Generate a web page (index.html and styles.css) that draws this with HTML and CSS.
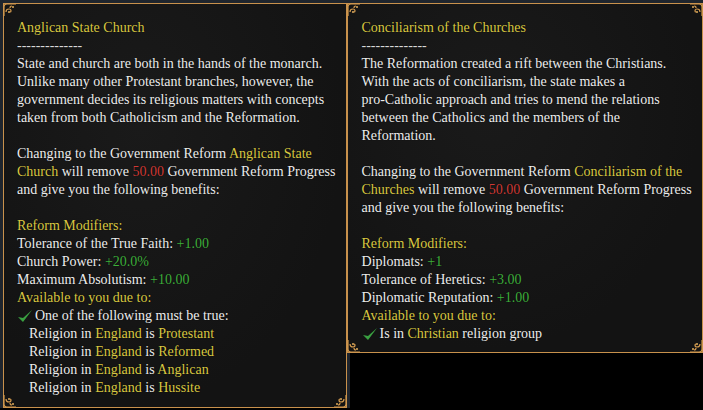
FILE: index.html
```html
<!DOCTYPE html>
<html lang="en">
<head>
  <meta charset="UTF-8" />
  <title>Government Reforms</title>
  <link rel="stylesheet" href="styles.css">
</head>
<body>

  <div class="tooltips">

    <!-- Anglican State Church -->
    <section class="tip tip-left">
      <svg class="corner tl" viewBox="0 0 14 14"><path d="M1 13 V4 Q1 1 4 1 H13 M3 9 q0 -3 3 -3 q2 0 2 2 q0 1 -1 1 M9 3 q-2 0 -2 2" /><circle cx="6" cy="9" r="1" /><circle cx="10" cy="4" r="1" /></svg>
      <svg class="corner bl" viewBox="0 0 14 14"><path d="M1 13 V4 Q1 1 4 1 H13 M3 9 q0 -3 3 -3 q2 0 2 2 q0 1 -1 1 M9 3 q-2 0 -2 2" /><circle cx="6" cy="9" r="1" /><circle cx="10" cy="4" r="1" /></svg>
      <svg class="corner br" viewBox="0 0 14 14"><path d="M1 13 V4 Q1 1 4 1 H13 M3 9 q0 -3 3 -3 q2 0 2 2 q0 1 -1 1 M9 3 q-2 0 -2 2" /><circle cx="6" cy="9" r="1" /><circle cx="10" cy="4" r="1" /></svg>

      <h2 class="tip-title">Anglican State Church</h2>
      <div class="rule">--------------</div>
      <p>State and church are both in the hands of the monarch.<br>
      Unlike many other Protestant branches, however, the<br>
      government decides its religious matters with concepts<br>
      taken from both Catholicism and the Reformation.</p>

      <p>Changing to the Government Reform <span class="hl">Anglican State<br>
      Church</span> will remove <span class="neg">50.00</span> Government Reform Progress<br>
      and give you the following benefits:</p>

      <p class="block">
        <span class="hl">Reform Modifiers:</span><br>
        Tolerance of the True Faith: <span class="pos">+1.00</span><br>
        Church Power: <span class="pos">+20.0%</span><br>
        Maximum Absolutism: <span class="pos">+10.00</span><br>
        <span class="hl">Available to you due to:</span>
      </p>
      <div class="cond"><svg class="check" viewBox="0 0 16 14"><path d="M1 8 L6 13 L15 1 L6 9 Z" /></svg><span>One of the following must be true:</span></div>
      <ul class="reqs">
        <li>Religion in <span class="hl">England</span> is <span class="hl">Protestant</span></li>
        <li>Religion in <span class="hl">England</span> is <span class="hl">Reformed</span></li>
        <li>Religion in <span class="hl">England</span> is <span class="hl">Anglican</span></li>
        <li>Religion in <span class="hl">England</span> is <span class="hl">Hussite</span></li>
      </ul>
    </section>

    <!-- Conciliarism of the Churches -->
    <section class="tip tip-right">
      <svg class="corner tl" viewBox="0 0 14 14"><path d="M1 13 V4 Q1 1 4 1 H13 M3 9 q0 -3 3 -3 q2 0 2 2 q0 1 -1 1 M9 3 q-2 0 -2 2" /><circle cx="6" cy="9" r="1" /><circle cx="10" cy="4" r="1" /></svg>
      <svg class="corner tr" viewBox="0 0 14 14"><path d="M1 13 V4 Q1 1 4 1 H13 M3 9 q0 -3 3 -3 q2 0 2 2 q0 1 -1 1 M9 3 q-2 0 -2 2" /><circle cx="6" cy="9" r="1" /><circle cx="10" cy="4" r="1" /></svg>
      <svg class="corner bl" viewBox="0 0 14 14"><path d="M1 13 V4 Q1 1 4 1 H13 M3 9 q0 -3 3 -3 q2 0 2 2 q0 1 -1 1 M9 3 q-2 0 -2 2" /><circle cx="6" cy="9" r="1" /><circle cx="10" cy="4" r="1" /></svg>
      <svg class="corner br" viewBox="0 0 14 14"><path d="M1 13 V4 Q1 1 4 1 H13 M3 9 q0 -3 3 -3 q2 0 2 2 q0 1 -1 1 M9 3 q-2 0 -2 2" /><circle cx="6" cy="9" r="1" /><circle cx="10" cy="4" r="1" /></svg>

      <h2 class="tip-title">Conciliarism of the Churches</h2>
      <div class="rule">--------------</div>
      <p>The Reformation created a rift between the Christians.<br>
      With the acts of conciliarism, the state makes a<br>
      pro-Catholic approach and tries to mend the relations<br>
      between the Catholics and the members of the<br>
      Reformation.</p>

      <p>Changing to the Government Reform <span class="hl">Conciliarism of the<br>
      Churches</span> will remove <span class="neg">50.00</span> Government Reform Progress<br>
      and give you the following benefits:</p>

      <p class="block">
        <span class="hl">Reform Modifiers:</span><br>
        Diplomats: <span class="pos">+1</span><br>
        Tolerance of Heretics: <span class="pos">+3.00</span><br>
        Diplomatic Reputation: <span class="pos">+1.00</span><br>
        <span class="hl">Available to you due to:</span>
      </p>
      <div class="cond"><svg class="check" viewBox="0 0 16 14"><path d="M1 8 L6 13 L15 1 L6 9 Z" /></svg><span>Is in <span class="hl">Christian</span> religion group</span></div>
    </section>

  </div>

</body>
</html>
```

FILE: styles.css
```css
* {
  margin: 0;
  padding: 0;
  box-sizing: border-box;
}
body {
  background: #000;
  font-family: 'Liberation Serif', 'Times New Roman', serif;
  font-size: 14px;
  line-height: 18px;
  color: #ededed;
  overflow: hidden;
}

.tooltips {
  display: flex;
  align-items: flex-start;
  padding: 3px 0 0 3px;
}

/* Cadre des infobulles */
.tip {
  position: relative;
  background: radial-gradient(ellipse at 40% 30%, #1a1a1a, #131313 70%);
  border: 1px solid #c8914c;
  padding: 15px 10px 10px 13px;
  text-shadow: 0 0 1px rgba(0, 0, 0, 0.8);
}
.tip-left {
  width: 344px;
  height: 405px;
  box-shadow: 0 0 0 3px #1f252d;
}
.tip-right {
  width: 357px;
  height: 350px;
  padding-left: 14px;
  box-shadow: 0 -3px 0 #1f252d;
}

.corner {
  position: absolute;
  width: 14px;
  height: 14px;
  fill: none;
  stroke: #d39a4e;
  stroke-width: 1.2;
}
.corner circle {
  fill: #e0ad5c;
  stroke: none;
}
.corner.tl { top: -1px; left: -1px; }
.corner.tr { top: -1px; right: -1px; transform: scaleX(-1); }
.corner.bl { bottom: -1px; left: -1px; transform: scaleY(-1); }
.corner.br { bottom: -1px; right: -1px; transform: scale(-1, -1); }

.tip-title {
  font-size: 14px;
  font-weight: normal;
  color: #d9c842;
}
.rule {
  color: #d8d8d8;
}

p {
  margin-bottom: 18px;
}
p.block {
  margin-bottom: 0;
}

.hl { color: #d9c842; }
.pos { color: #3fae3c; }
.neg { color: #cf3a36; }

.cond {
  display: flex;
  align-items: center;
}
.check {
  width: 16px;
  height: 14px;
  fill: #3aa041;
  margin-right: 2px;
}

.reqs {
  list-style: none;
  padding-left: 12px;
}
```
